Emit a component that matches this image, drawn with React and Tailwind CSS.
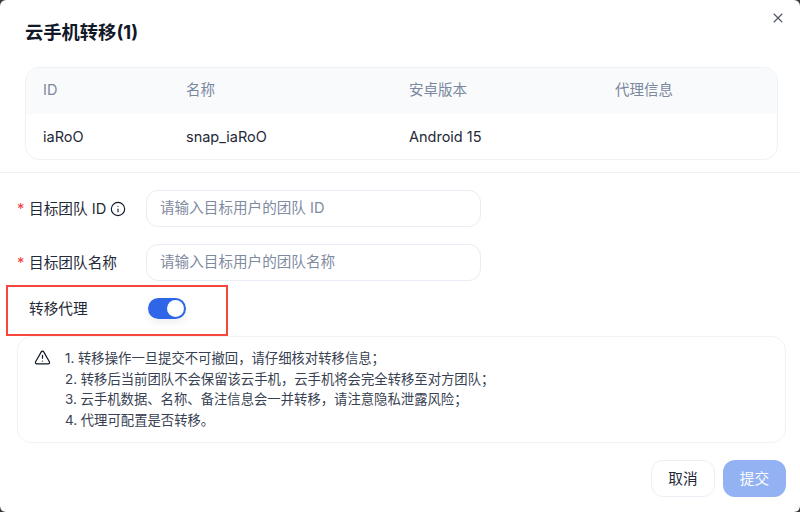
import React from "react";
import { X, TriangleAlert, Info } from "lucide-react";

const font = "font-['Inter','Noto_Sans_CJK_SC',sans-serif]";

function Field({ label, placeholder, icon }) {
  return (
    <div className="flex items-center h-[37px]">
      <div className="w-[146px] shrink-0 flex items-center pl-[17px] text-[14.67px] text-[#1f2937]">
        <span className="text-[#ef4444] w-[12px]">*</span>
        <span>{label}</span>
        {icon && <Info className="w-[16px] h-[16px] ml-[4px] text-[#111827]" strokeWidth={1.7} />}
      </div>
      <div className="w-[335px] h-[37px] border border-[#e8ecf4] rounded-[12px] flex items-center pl-[13px] text-[14.6px] text-[#7f8ba0]">
        {placeholder}
      </div>
    </div>
  );
}

export default function App() {
  return (
    <div className={`${font} w-[800px] h-[512px] bg-[#3a3a3a] overflow-hidden`}>
      <div className="relative w-full h-full bg-white rounded-[6px] flex flex-col">
        <button className="absolute top-[10px] right-[14px] text-[#4b5563]">
          <X className="w-[16px] h-[16px]" strokeWidth={1.6} />
        </button>
        <h1 className="pl-[25px] pt-[20px] h-[67px] text-[18.3px] leading-[25px] font-bold text-[#111827]">云手机转移(1)</h1>
        <div className="mx-[25px] mr-[22px] h-[93px] shrink-0 border border-[#eef1f6] rounded-[14px] overflow-hidden text-[14.5px]">
          <div className="h-[46px] pb-[2px] bg-[#f9fafb] grid grid-cols-[143px_223px_206px_1fr] items-center pl-[17px] text-[#7b89a0]">
            <span>ID</span>
            <span>名称</span>
            <span>安卓版本</span>
            <span>代理信息</span>
          </div>
          <div className="h-[46px] pb-[1px] grid grid-cols-[143px_223px_206px_1fr] items-center pl-[17px] text-[#1f2937]">
            <span>iaRoO</span>
            <span>snap_iaRoO</span>
            <span>Android 15</span>
            <span></span>
          </div>
        </div>
        <div className="mt-[12px] border-t border-[#f0f1f4] pt-[17px] flex flex-col gap-[17px]">
          <Field label="目标团队 ID" placeholder="请输入目标用户的团队 ID" icon />
          <Field label="目标团队名称" placeholder="请输入目标用户的团队名称" />
        </div>
        <div className="ml-[6px] mt-[4px] w-[222px] h-[51px] border-2 border-[#f5473b] flex items-center pl-[21px] pb-[4px] text-[14.67px] text-[#1f2937] shrink-0">
          <span className="w-[119px]">转移代理</span>
          <span className="w-[38px] h-[21px] rounded-full bg-[#2f66e8] flex items-center justify-end pr-[2px] shadow-[0_3px_8px_rgba(0,0,0,0.08)]">
            <span className="w-[17px] h-[17px] rounded-full bg-white" />
          </span>
        </div>
        <div className="mx-[17px] mr-[14px] h-[107px] shrink-0 border border-[#f0f2f7] rounded-[14px] flex pl-[16px] pt-[11px]">
          <TriangleAlert className="w-[17px] h-[17px] mt-[1px] text-[#111827]" strokeWidth={1.7} />
          <div className="ml-[14px] text-[13.35px] leading-[20.5px] text-[#374151]">
            <p>1. 转移操作一旦提交不可撤回，请仔细核对转移信息；</p>
            <p>2. 转移后当前团队不会保留该云手机，云手机将会完全转移至对方团队；</p>
            <p>3. 云手机数据、名称、备注信息会一并转移，请注意隐私泄露风险；</p>
            <p>4. 代理可配置是否转移。</p>
          </div>
        </div>
        <div className="mt-[17px] mr-[14px] flex justify-end gap-[8px] text-[14.67px]">
          <button className="w-[64px] h-[37px] border border-[#eceff5] rounded-[12px] text-[#1f2937] bg-white">取消</button>
          <button className="w-[63px] h-[37px] rounded-[12px] text-white bg-[#93b2f4]">提交</button>
        </div>
      </div>
    </div>
  );
}
